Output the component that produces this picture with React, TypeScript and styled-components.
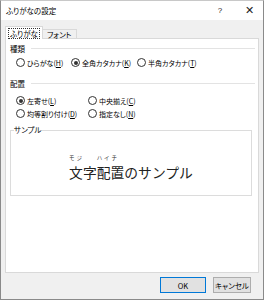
import React from 'react';
import styled, { createGlobalStyle } from 'styled-components';

const GlobalStyle = createGlobalStyle`
  html, body {
    margin: 0;
    padding: 0;
    background: #ffffff;
  }
  body {
    font-family: "Noto Sans CJK JP", "Noto Sans", sans-serif;
    font-feature-settings: "palt";
    color: #000;
  }
`;

const Window = styled.div`
  width: 264px;
  height: 300px;
  box-sizing: border-box;
  border: 1px solid #8a8a8a;
  border-top-color: #c8c8c8;
  display: flex;
  flex-direction: column;
  background: #f0f0f0;
`;

const TitleBar = styled.div`
  height: 19px;
  background: #fff;
  display: flex;
  align-items: center;
  padding-left: 5px;
  font-size: 7.5px;
`;

const TitleText = styled.div`
  flex: 1;
`;

const TitleButton = styled.div<{ $w: number; $big?: boolean }>`
  width: ${p => p.$w}px;
  text-align: center;
  font-family: "Liberation Sans", sans-serif;
  font-size: ${p => (p.$big ? 11 : 8)}px;
  color: #222;
`;

const Client = styled.div`
  flex: 1;
  display: flex;
  flex-direction: column;
  padding: 6px 4px 5px 4px;
`;

const TabStrip = styled.div`
  display: flex;
  align-items: flex-end;
  height: 13px;
  position: relative;
  z-index: 1;
`;

const Tab = styled.div<{ $active?: boolean }>`
  box-sizing: border-box;
  height: ${p => (p.$active ? 13 : 10)}px;
  padding: 0 ${p => (p.$active ? 3 : 4)}px;
  border: 1px solid #d9d9d9;
  border-bottom: ${p => (p.$active ? 'none' : '1px solid #d9d9d9')};
  background: ${p => (p.$active ? '#fff' : '#f0f0f0')};
  margin-left: ${p => (p.$active ? 0 : -1)}px;
  font-size: 7.5px;
  display: flex;
  align-items: center;
`;

const FocusLabel = styled.span`
  outline: 1px dotted #333;
  outline-offset: 0px;
  line-height: 9px;
  padding: 0 1px;
`;

const Panel = styled.div`
  box-sizing: border-box;
  height: 235px;
  background: #fff;
  border: 1px solid #d9d9d9;
  margin-top: -1px;
  padding: 3px 3px 0 4px;
  font-size: 7.5px;
`;

const SectionHeader = styled.div<{ $gap?: number }>`
  display: flex;
  align-items: center;
  height: 12px;
  gap: 6px;
  margin-top: ${p => p.$gap ?? 0}px;
  &::after {
    content: '';
    flex: 1;
    height: 1px;
    background: #e3e3e3;
  }
`;

const RadioRow = styled.div<{ $cols: string; $gap?: number }>`
  display: grid;
  grid-template-columns: ${p => p.$cols};
  height: 13px;
  align-items: center;
  padding-left: 6px;
  margin-top: ${p => p.$gap ?? 0}px;
  font-size: 7px;
`;

const RadioItem = styled.div`
  display: flex;
  align-items: center;
  gap: 2px;
  white-space: nowrap;
`;

const Circle = styled.span<{ $on?: boolean }>`
  box-sizing: border-box;
  width: 9px;
  height: 9px;
  border-radius: 50%;
  border: 1px solid #333;
  background: #fff;
  display: inline-flex;
  align-items: center;
  justify-content: center;
  &::after {
    content: '';
    width: 4px;
    height: 4px;
    border-radius: 50%;
    background: ${p => (p.$on ? '#333' : 'transparent')};
  }
`;

const Key = styled.span`
  text-decoration: underline;
`;

const GroupBox = styled.fieldset`
  margin: 6px 3px 0 0;
  padding: 21px 0 0 0;
  height: 70px;
  box-sizing: border-box;
  border: 1px solid #dcdcdc;
  display: flex;
  justify-content: center;
  align-items: flex-start;
`;

const GroupLegend = styled.legend`
  padding: 0;
  margin-left: 3px;
  font-size: 7.5px;
  line-height: 8px;
`;

const Sample = styled.div`
  display: flex;
  align-items: flex-end;
  font-size: 13.8px;
  font-feature-settings: normal;
  color: #222;
`;

const Word = styled.span`
  display: inline-flex;
  flex-direction: column;
  align-items: flex-start;
`;

const Reading = styled.span`
  font-size: 5.5px;
  line-height: 6px;
  height: 6px;
  margin-bottom: 4px;
  color: #333;
  letter-spacing: 2px;
  white-space: nowrap;
`;

const Base = styled.span`
  line-height: 15px;
`;

const ButtonRow = styled.div`
  display: flex;
  justify-content: flex-end;
  gap: 7px;
  margin-top: 4px;
  padding-right: 8px;
`;

const Button = styled.div<{ $primary?: boolean }>`
  box-sizing: border-box;
  width: ${p => (p.$primary ? 46 : 38)}px;
  height: 16px;
  border: 1px solid ${p => (p.$primary ? '#0078d7' : '#adadad')};
  background: #e1e1e1;
  font-size: 7.5px;
  display: flex;
  align-items: center;
  justify-content: center;
`;

export default function App() {
  return (
    <>
      <GlobalStyle />
      <Window>
        <TitleBar>
          <TitleText>ふりがなの設定</TitleText>
          <TitleButton $w={30}>?</TitleButton>
          <TitleButton $w={28} $big>✕</TitleButton>
        </TitleBar>
        <Client>
          <TabStrip>
            <Tab $active>
              <FocusLabel>ふりがな</FocusLabel>
            </Tab>
            <Tab>フォント</Tab>
          </TabStrip>
          <Panel>
            <SectionHeader>種類</SectionHeader>
            <RadioRow $cols="55px 66px 1fr" $gap={2}>
              <RadioItem>
                <Circle />
                <span>ひらがな(<Key>H</Key>)</span>
              </RadioItem>
              <RadioItem>
                <Circle $on />
                <span>全角カタカナ(<Key>K</Key>)</span>
              </RadioItem>
              <RadioItem>
                <Circle />
                <span>半角カタカナ(<Key>T</Key>)</span>
              </RadioItem>
            </RadioRow>
            <SectionHeader $gap={8}>配置</SectionHeader>
            <RadioRow $cols="72px 1fr" $gap={5}>
              <RadioItem>
                <Circle $on />
                <span>左寄せ(<Key>L</Key>)</span>
              </RadioItem>
              <RadioItem>
                <Circle />
                <span>中央揃え(<Key>C</Key>)</span>
              </RadioItem>
            </RadioRow>
            <RadioRow $cols="72px 1fr">
              <RadioItem>
                <Circle />
                <span>均等割り付け(<Key>D</Key>)</span>
              </RadioItem>
              <RadioItem>
                <Circle />
                <span>指定なし(<Key>N</Key>)</span>
              </RadioItem>
            </RadioRow>
            <GroupBox>
              <GroupLegend>サンプル</GroupLegend>
              <Sample>
                <Word>
                  <Reading>モジ</Reading>
                  <Base>文字</Base>
                </Word>
                <Word>
                  <Reading>ハイチ</Reading>
                  <Base>配置</Base>
                </Word>
                <Word>
                  <Base>のサンプル</Base>
                </Word>
              </Sample>
            </GroupBox>
          </Panel>
          <ButtonRow>
            <Button $primary>OK</Button>
            <Button>キャンセル</Button>
          </ButtonRow>
        </Client>
      </Window>
    </>
  );
}
